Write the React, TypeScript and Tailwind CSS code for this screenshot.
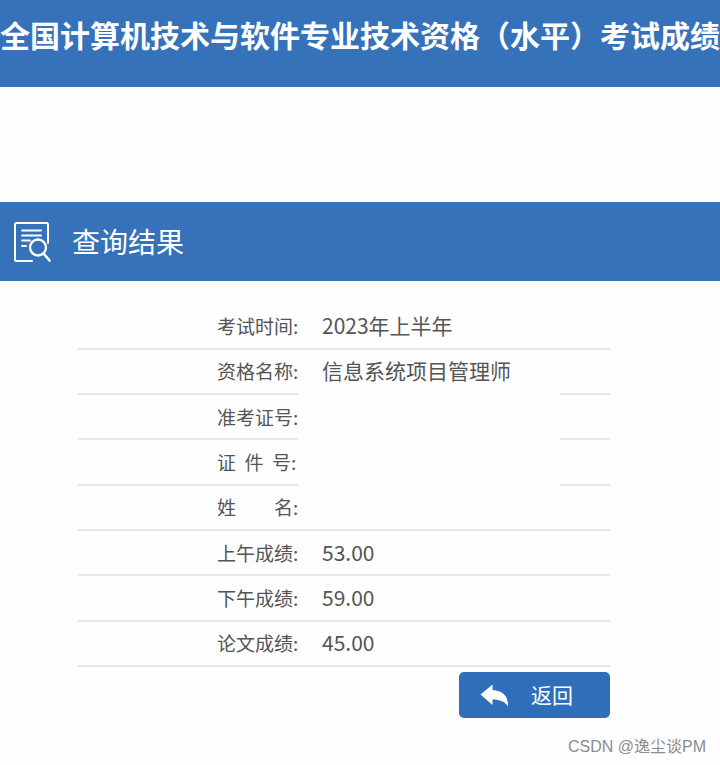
import React from "react";

const results = [
  { label: "考试时间:", value: "2023年上半年" },
  { label: "资格名称:", value: "信息系统项目管理师" },
  { label: "准考证号:", value: "" },
  { label: "证\u00a0\u00a0件\u00a0\u00a0号:", value: "" },
  { label: "姓\u3000\u3000名:", value: "" },
  { label: "上午成绩:", value: "53.00" },
  { label: "下午成绩:", value: "59.00" },
  { label: "论文成绩:", value: "45.00" },
];

function ResultIcon() {
  return (
    <svg
      width="38"
      height="42"
      viewBox="0 0 38 42"
      fill="none"
      stroke="currentColor"
      strokeWidth="2"
      strokeLinecap="round"
      strokeLinejoin="round"
      aria-hidden="true"
    >
      <path d="M19 40H3.5A1.500 1.500 0 0 1 2 38.500v-35A1.500 1.500 0 0 1 3.500 2h30A1.500 1.500 0 0 1 35 3.500V22" />
      <path d="M9 9.500h19M9 14.500h19M9 19.500h8M9 25h4" />
      <circle cx="25" cy="26.500" r="8" strokeWidth="2.300" />
      <path d="M30.500 32.500l6 7" strokeWidth="2.600" />
    </svg>
  );
}

function BackIcon() {
  return (
    <svg
      width="29"
      height="23"
      viewBox="0 0 29 23"
      fill="currentColor"
      aria-hidden="true"
    >
      <path d="M0.500 10.500 12.500 0.500v5.500C22 6.500 28.500 11.500 28 22.500 25 17.500 20 15.500 12.500 15.500v5.500Z" />
    </svg>
  );
}

export default function App() {
  return (
    <div className="overflow-hidden bg-[#fefefe] font-['Noto_Sans_CJK_SC',sans-serif] text-[#555555]">
      <header className="bg-[#3672ba] pt-3.5 pb-[33px] text-white">
        <h1 className="text-[30px] leading-10 font-bold whitespace-nowrap">
          全国计算机技术与软件专业技术资格（水平）考试成绩
        </h1>
      </header>

      <main className="mt-[115px]">
        <div className="flex items-center gap-[21px] bg-[#3672ba] px-[13px] py-[18px] text-white">
          <ResultIcon />
          <h2 className="text-[28px] leading-[43px]">查询结果</h2>
        </div>

        <div className="mt-6 mr-[110px] ml-[78px]">
          <table className="h-[362px] w-full border-collapse">
            <tbody>
              {results.map((row, i) => (
                <tr key={i} className="border-b-2 border-[#e6e6e6]">
                  <th
                    scope="row"
                    className="w-[235px] p-0 pl-[139px] text-left text-[19px] leading-6 font-normal whitespace-nowrap"
                  >
                    {row.label}
                  </th>
                  <td className="relative p-0 pb-0.5 pl-[9px] text-[21px] leading-[22px]">
                    {row.value}
                    {/* blank block over the three personal fields */}
                    {i === 2 && (
                      <div className="absolute -top-0.5 right-[50px] -left-[15px] h-[136px] bg-[#fefefe]" />
                    )}
                  </td>
                </tr>
              ))}
            </tbody>
          </table>

          <div className="mt-[5px] flex justify-end">
            <button
              type="button"
              className="flex h-[46px] w-[151px] items-center gap-[22px] rounded-[5px] bg-[#2f6fb9] pl-[21px] text-[21px] text-white"
            >
              <BackIcon />
              返回
            </button>
          </div>
        </div>
      </main>

      <footer className="mt-[17px] pr-3.5 pb-1.5 text-right font-['Liberation_Sans','Noto_Sans_CJK_SC',sans-serif] text-base leading-6 text-[#8c8c8c]">
        CSDN @逸尘谈PM
      </footer>
    </div>
  );
}
